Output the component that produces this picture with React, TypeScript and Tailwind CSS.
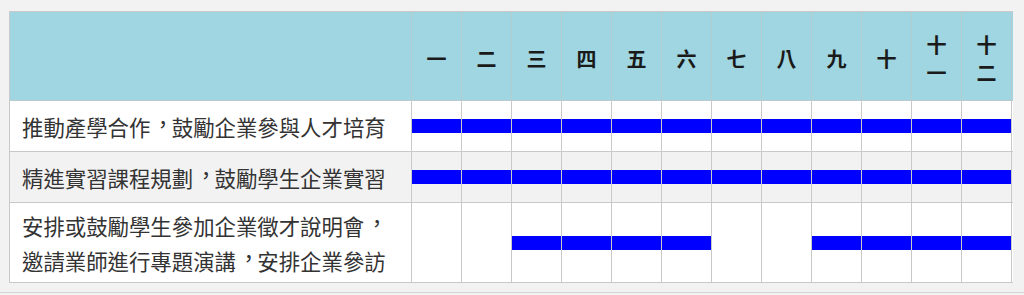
import React from "react";

const C = () => <span className="inline-block -translate-y-[4px] translate-x-[2px]">，</span>;

const months: React.ReactNode[] = [
  "一", "二", "三", "四", "五", "六", "七", "八", "九", "十",
  <span key="11" className="flex flex-col items-center leading-[28px]"><span>十</span><span>一</span></span>,
  <span key="12" className="flex flex-col items-center leading-[28px]"><span>十</span><span>二</span></span>,
];

const rows: { text: React.ReactNode; bars: boolean[]; bg: string; h: string }[] = [
  {
    text: <>推動產學合作<C />鼓勵企業參與人才培育</>,
    bars: Array(12).fill(true),
    bg: "bg-white",
    h: "h-[51px]",
  },
  {
    text: <>精進實習課程規劃<C />鼓勵學生企業實習</>,
    bars: Array(12).fill(true),
    bg: "bg-[#f2f2f2]",
    h: "h-[51px]",
  },
  {
    text: (
      <>
        安排或鼓勵學生參加企業徵才說明會<C />
        <br />
        邀請業師進行專題演講<C />安排企業參訪
      </>
    ),
    bars: [false, false, true, true, true, true, false, false, true, true, true, true],
    bg: "bg-white",
    h: "h-[80px]",
  },
];

export default function App() {
  return (
    <div
      lang="zh-Hant-TW"
      className="w-[1024px] h-[295px] bg-[#f2f2f2] overflow-hidden flex flex-col"
      style={{ fontFamily: '"Noto Sans CJK TC", "Noto Sans", sans-serif' }}
    >
      <div className="ml-[9px] mt-[11px] w-[1004px] border-l border-t border-[#c9c9c9] flex flex-col">
        <div className="flex h-[89px] bg-[#9fd6e1] border-b border-[#b9c9cc]">
          <div className="w-[402px] border-r border-[#b3ccd1]" />
          {months.map((m, i) => (
            <div
              key={i}
              className="w-[50px] border-r border-[#b3ccd1] flex items-center justify-center pt-[6px] text-[20px] font-semibold text-[#1a1a1a]"
            >
              {m}
            </div>
          ))}
        </div>
        {rows.map((r, ri) => (
          <div key={ri} className={`flex ${r.h} ${r.bg} border-b border-[#c9c9c9]`}>
            <div className="w-[402px] border-r border-[#c9c9c9] flex items-center pl-[12px] text-[21.4px] leading-[35px] text-[#333]">
              <div>{r.text}</div>
            </div>
            {r.bars.map((b, bi) => (
              <div key={bi} className="w-[50px] border-r border-[#c9c9c9] flex items-center">
                {b ? <div className="w-full h-[14px] bg-[#0000ff]" /> : null}
              </div>
            ))}
          </div>
        ))}
      </div>
      <div className="mt-[9px] h-px bg-[#d4d4d4] w-full" />
    </div>
  );
}
